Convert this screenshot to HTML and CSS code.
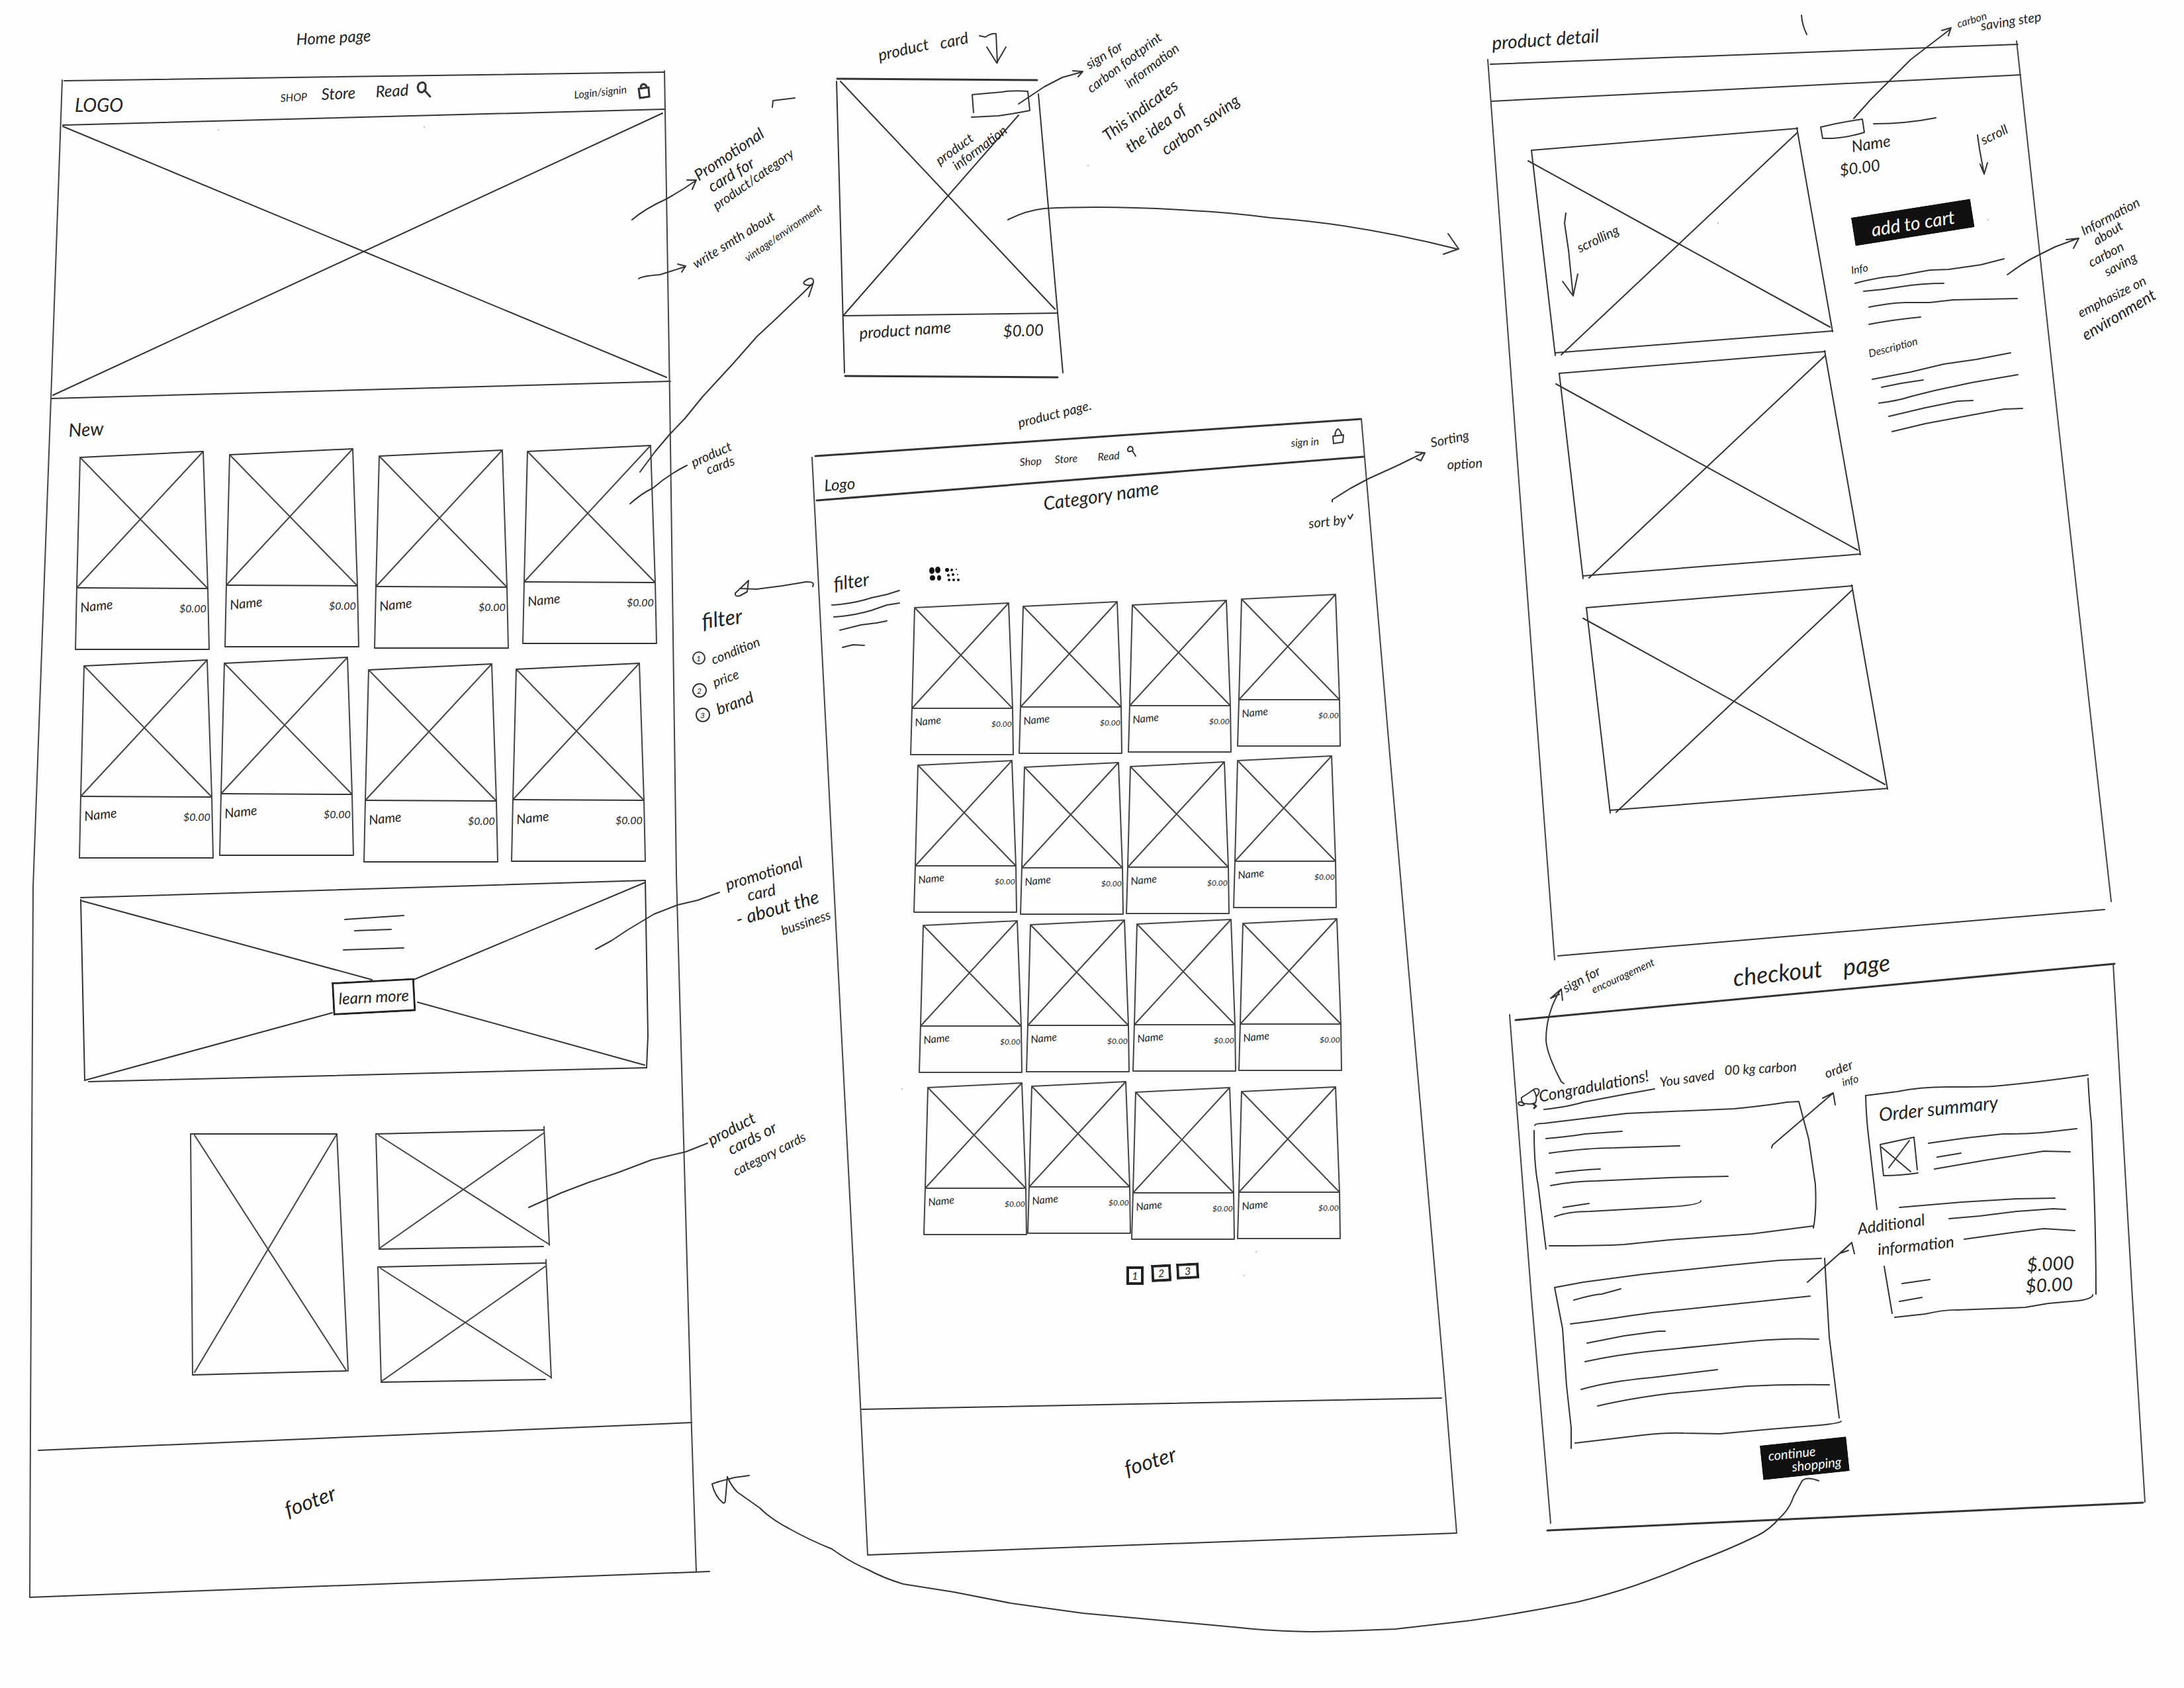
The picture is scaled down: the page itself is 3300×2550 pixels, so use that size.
FILE: index.html
```html
<!DOCTYPE html>
<html lang="en">
<head>
    <meta charset="UTF-8">
    <meta name="viewport" content="width=device-width, initial-scale=1.0">
    <title>Vintage Store Wireframes</title>
    <link rel="stylesheet" href="styles.css">
</head>
<body>
    <main class="board">
        <svg class="sketch" viewBox="0 0 3300 2550" xmlns="http://www.w3.org/2000/svg">
            <defs>
                <g id="card">
                    <path class="line" d="M0 0 L186 -9 M-5 197 L193 198 M-7 290 H195" />
                    <path class="thin" d="M-7 290 L-5 197 L0 0 L193 198 L195 290 M193 198 L186 -9 L-5 197" />
                </g>
                <g id="card-small">
                    <path class="thin" d="M0 0 L142 -7 L148 152 L149 222 H-6 L-4 151 L0 0 L148 152 H-4 L142 -7" />
                </g>
                <g id="photo">
                    <path class="line" d="M0 0 L402 -33 M36 306 L455 273 M-5 16 L451 267 M402 -27 L45 309" />
                    <path class="line" d="M0 0 L36 310 M401 -34 L455 274" />
                </g>
            </defs>

            <!-- Home page -->
            <g class="screen">
                <text class="note" transform="translate(448 68) rotate(-3)">Home page</text>
                <path class="line" d="M97 122 L1004 109 M95 189 L1004 165 M78 602 L1013 576 M58 2191 L1045 2149 M45 2413 L1072 2374" />
                <path class="thin" d="M94 121 L77 601 L50 1340 L46 2160 L45 2413 M1004 107 L1012 600 L1022 1322 L1045 2160 L1052 2374" />
                <path class="line" d="M95 191 L1007 570 M1001 171 L80 597" />

                <a href="#"><text class="title" transform="translate(113 169)">LOGO</text></a>
                <a href="#"><text class="small" transform="translate(424 154) rotate(-3)">SHOP</text></a>
                <a href="#"><text class="note" transform="translate(486 151) rotate(-3)">Store</text></a>
                <a href="#"><text class="note" transform="translate(568 147) rotate(-3)">Read</text></a>
                <path class="bold" d="M643 135 Q638 142 633 138 Q629 130 634 126 Q640 122 643 128 Z M641 136 L650 146" />
                <a href="#"><text class="small" transform="translate(868 149) rotate(-6)">Login/signin</text></a>
                <path class="bold" d="M965 134 L980 132 L981 146 L967 148 Z M968 133 Q968 128 972 127 Q977 128 977 132" />
                <circle class="dot" cx="330" cy="196" r="1" />
                <circle class="dot" cx="641" cy="192" r="1" />

                <text class="title" transform="translate(104 660) rotate(-3)">New</text>
                <g transform="translate(121 691)">
                    <use href="#card" />
                    <text class="label" transform="translate(1 234) rotate(-6)">Name</text>
                    <text class="small" transform="translate(150 234)">$0.00</text>
                </g>
                <g transform="translate(347 687)">
                    <use href="#card" />
                    <text class="label" transform="translate(1 234) rotate(-6)">Name</text>
                    <text class="small" transform="translate(150 234)">$0.00</text>
                </g>
                <g transform="translate(573 689)">
                    <use href="#card" />
                    <text class="label" transform="translate(1 234) rotate(-6)">Name</text>
                    <text class="small" transform="translate(150 234)">$0.00</text>
                </g>
                <g transform="translate(797 682)">
                    <use href="#card" />
                    <text class="label" transform="translate(1 234) rotate(-6)">Name</text>
                    <text class="small" transform="translate(150 234)">$0.00</text>
                </g>
                <g transform="translate(127 1006)">
                    <use href="#card" />
                    <text class="label" transform="translate(1 234) rotate(-6)">Name</text>
                    <text class="small" transform="translate(150 234)">$0.00</text>
                </g>
                <g transform="translate(339 1002)">
                    <use href="#card" />
                    <text class="label" transform="translate(1 234) rotate(-6)">Name</text>
                    <text class="small" transform="translate(150 234)">$0.00</text>
                </g>
                <g transform="translate(557 1012)">
                    <use href="#card" />
                    <text class="label" transform="translate(1 234) rotate(-6)">Name</text>
                    <text class="small" transform="translate(150 234)">$0.00</text>
                </g>
                <g transform="translate(780 1011)">
                    <use href="#card" />
                    <text class="label" transform="translate(1 234) rotate(-6)">Name</text>
                    <text class="small" transform="translate(150 234)">$0.00</text>
                </g>

                <!-- promo banner -->
                <path class="line" d="M122 1356 L975 1330 M134 1634 L977 1613 M124 1361 L562 1480 M975 1333 L625 1480 M502 1530 L128 1632 M631 1514 L974 1609" />
                <path class="line" d="M122 1359 L128 1632 M975 1330 L979 1564 L977 1613 M521 1389 L610 1383 M536 1406 L591 1404 M519 1435 L610 1432" />
                <foreignObject x="501" y="1484" width="125" height="50" transform="rotate(-3 501 1484)">
                    <button class="btn btn-outline">learn more</button>
                </foreignObject>

                <!-- category cards -->
                <path class="line" d="M288 1713 L509 1713 M291 2077 L524 2071 M568 1713 L822 1707 M573 1887 L821 1883 M571 1914 L825 1908 M576 2088 L824 2084" />
                <path class="thin" d="M288 1713 L291 2077 M509 1713 L526 2071 M294 1715 L523 2070 M509 1713 L294 2073" />
                <path class="thin" d="M568 1713 L573 1887 M822 1702 L830 1881 M572 1715 L830 1880 M821 1712 L573 1886" />
                <path class="thin" d="M571 1914 L576 2088 M825 1903 L833 2082 M575 1916 L833 2081 M824 1913 L576 2087" />

                <text class="footer" transform="translate(435 2292) rotate(-20)">footer</text>
            </g>

            <!-- Home page notes -->
            <g class="notes">
                <path class="line" d="M955 332 Q975 315 1006 301 Q1030 288 1051 273 M1038 272 L1052 272 L1046 286" />
                <text class="note" transform="translate(1056 274) rotate(-34)">Promotional</text>
                <text class="note" transform="translate(1076 291) rotate(-31)">card for</text>
                <text class="label" transform="translate(1083 318) rotate(-35)">product/category</text>
                <path class="line" d="M965 421 Q970 417 997 415 L1035 403 M1024 399 L1036 402 L1030 411" />
                <text class="label" transform="translate(1052 406) rotate(-32)">write smth about</text>
                <text class="small" transform="translate(1130 396) rotate(-35)">vintage/environment</text>
                <path class="line" d="M967 713 L990 682 L1012 656 L1035 632 L1061 600 L1107 550 L1144 508 L1170 484 L1217 439 L1229 427 Q1230 419 1222 421 Q1210 427 1217 430 Q1225 433 1229 427 L1222 448" />
                <path class="line" d="M952 761 Q970 745 987 737 Q1010 717 1038 703" />
                <text class="label" transform="translate(1048 706) rotate(-24)">product</text>
                <text class="label" transform="translate(1070 717) rotate(-20)">cards</text>
                <path class="line" d="M900 1434 L924 1421 L948 1405 L988 1381 L1024 1367 L1054 1360 L1087 1348" />
                <text class="note" transform="translate(1099 1345) rotate(-17)">promotional</text>
                <text class="note" transform="translate(1131 1361) rotate(-12)">card</text>
                <text class="title" transform="translate(1115 1399) rotate(-16)">- about the</text>
                <text class="label" transform="translate(1183 1413) rotate(-19)">bussiness</text>
                <path class="line" d="M799 1824 L848 1802 L890 1786 L932 1772 L985 1752 L1036 1740 L1069 1727" />
                <text class="note" transform="translate(1075 1731) rotate(-28)">product</text>
                <text class="note" transform="translate(1105 1745) rotate(-27)">cards or</text>
                <text class="label" transform="translate(1112 1777) rotate(-27)">category cards</text>
                <path class="line" d="M1167 162 L1168 152 L1201 148" />
            </g>

            <!-- Product card -->
            <g class="screen">
                <text class="note" transform="translate(1329 92) rotate(-13)">product</text>
                <text class="note" transform="translate(1422 74) rotate(-12)">card</text>
                <path class="line" d="M1480 54 L1489 56 Q1498 50 1505 51 L1507 95 M1491 71 L1506 95 L1520 71" />
                <path class="bold" d="M1265 119 L1567 121 M1277 568 L1598 570" />
                <path class="line" d="M1274 477 L1598 473 M1270 123 L1594 467 M1539 174 L1274 477" />
                <path class="line" d="M1264 123 L1276 563 M1569 142 L1606 563" />
                <path class="line" d="M1471 170 L1469 143 Q1490 141 1514 139 Q1530 136 1553 138 L1556 167 Q1530 172 1508 175 L1468 177" />
                <text class="label" transform="translate(1420 250) rotate(-36)">product</text>
                <text class="label" transform="translate(1446 258) rotate(-37)">information</text>
                <text class="note" transform="translate(1299 512) rotate(-4)">product name</text>
                <text class="note" transform="translate(1516 509) rotate(-2)">$0.00</text>
                <path class="line" d="M1539 157 L1578 131 L1605 117 L1634 109 M1621 107 L1636 108 L1629 116" />
                <text class="label" transform="translate(1646 105) rotate(-31)">sign for</text>
                <text class="label" transform="translate(1649 141) rotate(-37)">carbon footprint</text>
                <text class="label" transform="translate(1706 134) rotate(-37)">information</text>
                <text class="note" transform="translate(1674 214) rotate(-37)">This indicates</text>
                <text class="note" transform="translate(1708 232) rotate(-36)">the idea of</text>
                <text class="note" transform="translate(1762 235) rotate(-35)">carbon saving</text>
                <path class="line" d="M1523 332 Q1550 318 1578 315 Q1676 310 1799 318 Q1860 321 1920 329 Q2050 338 2201 376 M2188 353 L2204 376 L2181 384" />
                <circle class="dot" cx="1644" cy="250" r="1" />
            </g>

            <!-- Product page -->
            <g class="screen">
                <text class="label" transform="translate(1540 646) rotate(-14)">product page.</text>
                <path class="bold" d="M1232 689 L2056 633 M1234 756 L2060 690" />
                <path class="line" d="M1302 2129 L2178 2112 M1311 2349 L2201 2316" />
                <path class="thin" d="M1227 691 L1250 1140 L1256 1260 L1298 2080 L1311 2349 M2057 633 L2100 1140 L2182 2080 L2201 2316" />
                <a href="#"><text class="note" transform="translate(1246 742) rotate(-4)">Logo</text></a>
                <a href="#"><text class="small" transform="translate(1541 704) rotate(-4)">Shop</text></a>
                <a href="#"><text class="small" transform="translate(1594 700) rotate(-4)">Store</text></a>
                <a href="#"><text class="small" transform="translate(1659 696) rotate(-4)">Read</text></a>
                <path class="line" d="M1711 681 Q1703 684 1704 678 Q1707 673 1710 675 Q1713 678 1711 681 L1716 689" />
                <a href="#"><text class="small" transform="translate(1951 675) rotate(-4)">sign in</text></a>
                <path class="line" d="M2014 659 L2030 657 L2029 668 L2015 670 Z M2017 658 Q2018 649 2022 648 Q2026 651 2027 657" />
                <text class="title" transform="translate(1578 771) rotate(-8)">Category name</text>
                <foreignObject x="1976" y="778" width="64" height="24" transform="rotate(-6 1976 778)">
                    <select class="sort" aria-label="sort by"><option>sort by</option></select>
                </foreignObject>
                <path class="line" d="M2037 779 L2040 784 L2044 777" />
                <path class="line" d="M2013 758 L2013 755 L2040 738 L2068 723 L2110 704 L2151 684 M2139 683 L2153 684 L2147 696 L2140 693" />
                <text class="label" transform="translate(2163 676) rotate(-12)">Sorting</text>
                <text class="label" transform="translate(2187 709) rotate(-3)">option</text>

                <g class="view-toggle">
                    <ellipse cx="1408" cy="862" rx="4" ry="5" /><ellipse cx="1417" cy="861" rx="4" ry="5" />
                    <ellipse cx="1409" cy="873" rx="4" ry="4" /><ellipse cx="1419" cy="873" rx="3" ry="4" />
                    <circle cx="1431" cy="861" r="3" /><circle cx="1438" cy="861" r="2" /><circle cx="1445" cy="860" r="1" />
                    <circle cx="1433" cy="869" r="2" /><circle cx="1440" cy="868" r="2" /><circle cx="1447" cy="868" r="1" />
                    <circle cx="1434" cy="876" r="2" /><circle cx="1441" cy="876" r="2" /><circle cx="1448" cy="876" r="2" />
                </g>

                <text class="title" transform="translate(1261 892) rotate(-8)">filter</text>
                <path class="line" d="M1257 914 Q1290 912 1317 903 L1340 898 L1359 892 M1260 932 Q1290 930 1317 922 L1340 914 L1359 911 M1269 952 L1301 944 L1325 941 L1340 938 M1273 978 L1289 974 L1306 975" />
                <path class="line" d="M1228 886 Q1232 878 1218 879 L1182 885 L1143 890 L1119 889 M1131 877 L1111 896 Q1110 902 1118 900 L1129 894 L1131 877" />
                <text class="footer" transform="translate(1062 950) rotate(-8)">filter</text>
                <circle class="line" cx="1056" cy="994" r="9" />
                <text class="tiny" x="1052" y="999">1</text>
                <text class="label" transform="translate(1078 1004) rotate(-22)">condition</text>
                <circle class="line" cx="1057" cy="1043" r="10" />
                <text class="tiny" x="1053" y="1048">2</text>
                <text class="label" transform="translate(1080 1038) rotate(-20)">price</text>
                <circle class="line" cx="1062" cy="1080" r="10" />
                <text class="tiny" x="1058" y="1085">3</text>
                <text class="note" transform="translate(1086 1080) rotate(-20)">brand</text>

                <g transform="translate(1382 918)">
                    <use href="#card-small" />
                    <text class="small" transform="translate(1 179) rotate(-6)">Name</text>
                    <text class="tiny" transform="translate(116 180)">$0.00</text>
                </g>
                <g transform="translate(1546 916)">
                    <use href="#card-small" />
                    <text class="small" transform="translate(1 179) rotate(-6)">Name</text>
                    <text class="tiny" transform="translate(116 180)">$0.00</text>
                </g>
                <g transform="translate(1711 914)">
                    <use href="#card-small" />
                    <text class="small" transform="translate(1 179) rotate(-6)">Name</text>
                    <text class="tiny" transform="translate(116 180)">$0.00</text>
                </g>
                <g transform="translate(1876 905)">
                    <use href="#card-small" />
                    <text class="small" transform="translate(1 179) rotate(-6)">Name</text>
                    <text class="tiny" transform="translate(116 180)">$0.00</text>
                </g>
                <g transform="translate(1387 1156)">
                    <use href="#card-small" />
                    <text class="small" transform="translate(1 179) rotate(-6)">Name</text>
                    <text class="tiny" transform="translate(116 180)">$0.00</text>
                </g>
                <g transform="translate(1548 1159)">
                    <use href="#card-small" />
                    <text class="small" transform="translate(1 179) rotate(-6)">Name</text>
                    <text class="tiny" transform="translate(116 180)">$0.00</text>
                </g>
                <g transform="translate(1708 1158)">
                    <use href="#card-small" />
                    <text class="small" transform="translate(1 179) rotate(-6)">Name</text>
                    <text class="tiny" transform="translate(116 180)">$0.00</text>
                </g>
                <g transform="translate(1870 1149)">
                    <use href="#card-small" />
                    <text class="small" transform="translate(1 179) rotate(-6)">Name</text>
                    <text class="tiny" transform="translate(116 180)">$0.00</text>
                </g>
                <g transform="translate(1395 1398)">
                    <use href="#card-small" />
                    <text class="small" transform="translate(1 179) rotate(-6)">Name</text>
                    <text class="tiny" transform="translate(116 180)">$0.00</text>
                </g>
                <g transform="translate(1557 1397)">
                    <use href="#card-small" />
                    <text class="small" transform="translate(1 179) rotate(-6)">Name</text>
                    <text class="tiny" transform="translate(116 180)">$0.00</text>
                </g>
                <g transform="translate(1718 1396)">
                    <use href="#card-small" />
                    <text class="small" transform="translate(1 179) rotate(-6)">Name</text>
                    <text class="tiny" transform="translate(116 180)">$0.00</text>
                </g>
                <g transform="translate(1878 1395)">
                    <use href="#card-small" />
                    <text class="small" transform="translate(1 179) rotate(-6)">Name</text>
                    <text class="tiny" transform="translate(116 180)">$0.00</text>
                </g>
                <g transform="translate(1402 1643)">
                    <use href="#card-small" />
                    <text class="small" transform="translate(1 179) rotate(-6)">Name</text>
                    <text class="tiny" transform="translate(116 180)">$0.00</text>
                </g>
                <g transform="translate(1559 1641)">
                    <use href="#card-small" />
                    <text class="small" transform="translate(1 179) rotate(-6)">Name</text>
                    <text class="tiny" transform="translate(116 180)">$0.00</text>
                </g>
                <g transform="translate(1716 1650)">
                    <use href="#card-small" />
                    <text class="small" transform="translate(1 179) rotate(-6)">Name</text>
                    <text class="tiny" transform="translate(116 180)">$0.00</text>
                </g>
                <g transform="translate(1876 1649)">
                    <use href="#card-small" />
                    <text class="small" transform="translate(1 179) rotate(-6)">Name</text>
                    <text class="tiny" transform="translate(116 180)">$0.00</text>
                </g>

                <foreignObject x="1702" y="1913" width="26" height="28">
                    <button class="btn page-btn">1</button>
                </foreignObject>
                <foreignObject x="1739" y="1911" width="30" height="26" transform="rotate(-3 1739 1911)">
                    <button class="btn page-btn">2</button>
                </foreignObject>
                <foreignObject x="1777" y="1909" width="34" height="24" transform="rotate(-3 1777 1909)">
                    <button class="btn page-btn">3</button>
                </foreignObject>
                <circle class="dot" cx="1363" cy="1645" r="1" />
                <circle class="dot" cx="1898" cy="1891" r="1" />
                <circle class="dot" cx="1880" cy="1927" r="1" />
                <text class="footer" transform="translate(1703 2230) rotate(-17)">footer</text>
            </g>

            <!-- Product detail -->
            <g class="screen">
                <text class="title" transform="translate(2255 75) rotate(-4)">product detail</text>
                <path class="line" d="M2722 23 Q2723 38 2730 52" />
                <path class="line" d="M2252 97 L3049 67 M2253 153 L3053 113 M2354 1444 L3180 1374" />
                <path class="thin" d="M2248 90 L2296 740 L2349 1450 M3047 62 L3121 740 L3190 1362" />
                <use href="#photo" x="2314" y="227" />
                <use href="#photo" x="2356" y="564" />
                <use href="#photo" x="2397" y="918" />
                <path class="line" d="M2366 322 L2364 337 L2370 378 L2377 447 M2361 425 L2377 447 L2384 414" />
                <text class="label" transform="translate(2387 382) rotate(-26)">scrolling</text>

                <path class="line" d="M2751 192 Q2780 185 2814 180 L2817 200 Q2785 210 2754 209 Z M2831 187 Q2880 187 2925 178" />
                <path class="line" d="M2801 179 L2826 151 L2852 125 L2887 90 L2947 44 M2934 46 L2948 42 L2944 54" />
                <text class="small" transform="translate(2959 42) rotate(-17)">carbon</text>
                <text class="label" transform="translate(2994 46) rotate(-9)">saving step</text>
                <text class="note" transform="translate(2799 230) rotate(-9)">Name</text>
                <text class="note" transform="translate(2781 266) rotate(-8)">$0.00</text>
                <path class="line" d="M2988 204 L2991 225 L2998 263 M2992 248 L2998 263 L3003 246" />
                <text class="label" transform="translate(2997 219) rotate(-26)">scroll</text>
                <foreignObject x="2797" y="329" width="182" height="43" transform="rotate(-9 2797 329)">
                    <button class="btn btn-fill">add to cart</button>
                </foreignObject>

                <text class="small" transform="translate(2798 414) rotate(-10)">Info</text>
                <path class="line" d="M2803 428 Q2840 418 2866 417 L2916 408 L2944 407 L2993 400 L3028 391 M2816 440 Q2845 438 2873 433 Q2905 428 2937 428 M2824 464 Q2860 457 2880 457 L2916 457 L2951 453 L3048 451 M2824 490 Q2860 483 2902 479" />
                <text class="small" transform="translate(2825 540) rotate(-15)">Description</text>
                <path class="line" d="M2829 573 L2887 562 L2937 550 L2986 543 L3038 533 M2843 585 L2873 579 L2906 574 M2839 609 Q2870 605 2887 599 L2923 590 L2979 578 L3049 566 M2854 629 L2909 616 L2958 606 L2981 605 M2859 652 L2909 640 L2979 627 L3028 618 L3056 617" />
                <path class="line" d="M3033 415 Q3060 395 3077 387 L3105 373 L3140 360 M3122 362 L3141 360 L3133 375" />
                <text class="label" transform="translate(3149 356) rotate(-28)">Information</text>
                <text class="label" transform="translate(3168 371) rotate(-32)">about</text>
                <text class="label" transform="translate(3160 404) rotate(-28)">carbon</text>
                <text class="label" transform="translate(3184 418) rotate(-28)">saving</text>
                <text class="label" transform="translate(3144 480) rotate(-27)">emphasize on</text>
                <text class="note" transform="translate(3152 515) rotate(-31)">environment</text>
                <circle class="dot" cx="2596" cy="337" r="1" />
                <circle class="dot" cx="3004" cy="332" r="1" />
            </g>

            <!-- Checkout page -->
            <g class="screen">
                <text class="heading" transform="translate(2620 1490) rotate(-6)">checkout</text>
                <text class="heading" transform="translate(2786 1474) rotate(-6)">page</text>
                <path class="bold" d="M2290 1541 L3195 1456 M2338 2312 L3238 2270" />
                <path class="thin" d="M2281 1533 L2314 1960 L2343 2301 M3193 1456 L3222 1960 L3241 2269" />
                <path class="line" d="M2363 1637 L2359 1634 Q2337 1592 2336 1571 Q2336 1530 2358 1495 M2343 1508 L2359 1494 L2361 1511 M2343 1508 L2356 1502" />
                <text class="label" transform="translate(2366 1500) rotate(-28)">sign for</text>
                <text class="small" transform="translate(2408 1501) rotate(-25)">encouragement</text>

                <path class="line" d="M2317 1646 L2310 1651 L2299 1658 Q2298 1665 2303 1667 Q2314 1669 2320 1666 Q2324 1657 2317 1646 Q2322 1643 2325 1646 Q2327 1650 2322 1656 M2302 1667 Q2296 1662 2294 1667 Q2296 1672 2303 1669" />
                <path class="bold" d="M2317 1668 L2321 1671 L2318 1674" />
                <text class="note" transform="translate(2327 1665) rotate(-11)">Congradulations!</text>
                <text class="label" transform="translate(2509 1642) rotate(-8)">You saved</text>
                <text class="label" transform="translate(2606 1624) rotate(-3)">00 kg carbon</text>
                <path class="line" d="M2333 1676 Q2370 1672 2392 1665 L2461 1652 L2500 1645" />

                <path class="line" d="M2319 1700 Q2320 1697 2333 1697 L2399 1689 L2458 1682 L2620 1675 Q2670 1670 2700 1665 L2718 1664 L2733 1721 L2743 1789 Q2745 1830 2740 1855 M2341 1882 Q2420 1882 2454 1880 L2523 1873 L2647 1864 L2740 1852" />
                <path class="line" d="M2318 1708 Q2318 1760 2324 1790 L2336 1887" />
                <path class="line" d="M2336 1720 Q2370 1717 2395 1713 L2451 1709 M2341 1742 Q2400 1734 2440 1734 L2538 1731 M2351 1772 Q2390 1767 2418 1766 M2343 1791 Q2380 1784 2413 1784 L2523 1779 L2611 1777 M2362 1824 L2401 1818 M2349 1838 Q2370 1830 2403 1830 L2509 1824 Q2570 1821 2570 1814" />
                <path class="line" d="M2677 1734 L2678 1730 L2769 1652 M2754 1659 L2770 1651 L2773 1669" />
                <text class="label" transform="translate(2760 1629) rotate(-20)">order</text>
                <text class="small" transform="translate(2785 1641) rotate(-15)">info</text>

                <path class="line" d="M2349 1945 L2392 1937 L2482 1925 L2606 1912 L2688 1904 L2752 1901 M2380 2180 L2482 2168 Q2520 2164 2544 2165 L2599 2166 L2675 2159 L2750 2153 Q2780 2150 2782 2147" />
                <path class="line" d="M2349 1945 L2361 2007 L2367 2093 L2374 2157 L2374 2188 M2757 1901 L2764 2020 L2779 2142" />
                <path class="line" d="M2378 1964 Q2410 1955 2420 1955 L2449 1947 M2373 2000 Q2400 1997 2496 1983 L2735 1958 M2398 2029 L2454 2018 L2506 2011 L2516 2011 M2395 2057 Q2440 2047 2496 2041 L2647 2026 Q2700 2021 2748 2023 M2389 2099 Q2430 2087 2496 2081 L2595 2069 M2414 2124 Q2460 2113 2523 2105 L2640 2094 Q2700 2091 2764 2092" />
                <path class="line" d="M2731 1937 L2797 1878 M2781 1893 L2798 1877 L2802 1894 M2781 1893 L2793 1889" />

                <path class="line" d="M2819 1655 L2867 1649 Q2900 1642 2943 1642 Q3000 1642 3012 1641 Q3080 1635 3155 1624 M2863 1990 L2909 1985 Q2940 1978 2957 1979 L3060 1975 L3095 1969 L3140 1965 Q3162 1962 3162 1956" />
                <path class="line" d="M2819 1655 Q2820 1690 2823 1714 L2836 1827 M2847 1913 L2859 1984 M3155 1629 Q3157 1670 3160 1696 L3164 1793 Q3167 1880 3167 1955" />
                <text class="title" transform="translate(2840 1694) rotate(-6)">Order summary</text>
                <path class="line" d="M2846 1776 L2841 1729 L2892 1718 L2897 1767 M2846 1776 Q2870 1776 2898 1772 M2843 1733 L2887 1770 M2885 1723 L2854 1764" />
                <path class="line" d="M2914 1727 L2971 1719 L3026 1713 Q3070 1713 3095 1710 L3138 1705 M2927 1748 L2963 1742 M2923 1766 L2998 1753 L3088 1739 L3128 1740 M2870 1824 L2964 1816 L3047 1811 L3105 1810 M2945 1841 L2991 1837 L3047 1830 L3102 1826 L3121 1827 M2968 1872 L3033 1863 L3088 1856 L3135 1859" />
                <text class="note" transform="translate(2808 1865) rotate(-8)">Additional</text>
                <text class="note" transform="translate(2838 1896) rotate(-6)">information</text>
                <path class="line" d="M2874 1939 L2916 1933 M2870 1966 L2904 1960" />
                <text class="title" transform="translate(3063 1921) rotate(-3)">$.000</text>
                <text class="title" transform="translate(3061 1953) rotate(-3)">$0.00</text>

                <foreignObject x="2659" y="2184" width="131" height="52" transform="rotate(-6 2659 2184)">
                    <button class="btn btn-fill btn-stacked"><span>continue</span> <span>shopping</span></button>
                </foreignObject>
                <path class="line" d="M2748 2237 Q2730 2230 2723 2237 L2710 2261 Q2704 2280 2688 2294 Q2675 2310 2655 2320 Q2610 2342 2558 2361 Q2520 2378 2471 2395 Q2430 2409 2384 2420 Q2300 2437 2222 2448 L2108 2461 Q2040 2464 1983 2465 Q1920 2464 1875 2459 L1745 2447 L1636 2437 L1528 2422 L1441 2405 L1365 2393 Q1335 2384 1311 2371 Q1285 2360 1257 2340 Q1220 2325 1192 2309 Q1165 2295 1148 2278 L1114 2254 Q1105 2245 1099 2231" />
                <path class="line" d="M1132 2229 L1110 2232 Q1078 2240 1076 2242 Q1080 2260 1092 2270 Q1096 2272 1096 2266 L1099 2231" />
            </g>
        </svg>
    </main>
</body>
</html>
```
FILE: styles.css
```css
body {
    margin: 0;
    background-color: #fefefe;
    color: #222;
    font-family: Lato, "Liberation Sans", sans-serif;
}

.board {
    width: 100%;
}

.sketch {
    display: block;
    width: 100%;
    height: auto;
}

/* strokes */
.line,
.thin,
.bold {
    fill: none;
    stroke: #333;
    stroke-linecap: round;
    stroke-linejoin: round;
    stroke-width: 2;
}

.thin {
    stroke: #444;
}

.bold {
    stroke-width: 3;
}

.dot {
    fill: #aaa;
}

.view-toggle {
    fill: #111;
}

/* handwriting */
text {
    fill: #222;
    font-style: italic;
}

.tiny {
    font-size: 12px;
}

.small {
    font-size: 16px;
}

.label {
    font-size: 20px;
}

.note {
    font-size: 24px;
}

.title {
    font-size: 28px;
}

.footer {
    font-size: 32px;
}

.heading {
    font-size: 36px;
}

/* controls */
.btn {
    display: block;
    box-sizing: border-box;
    width: 100%;
    height: 100%;
    margin: 0;
    padding: 0;
    border: 3px solid #222;
    background: none;
    color: #222;
    font-family: inherit;
    font-size: 20px;
    font-style: italic;
    line-height: 20px;
    cursor: pointer;
}

.btn-outline {
    font-size: 24px;
    line-height: 24px;
}

.btn-fill {
    border-color: #111;
    background-color: #111;
    color: #fff;
    font-size: 28px;
}

.btn-stacked {
    display: flex;
    flex-direction: column;
    justify-content: center;
    padding: 0 8px;
    font-size: 20px;
}

.btn-stacked span:last-child {
    align-self: flex-end;
}

.btn-stacked span:first-child {
    align-self: flex-start;
}

.page-btn {
    border-width: 4px;
    font-size: 16px;
    line-height: 16px;
}

.sort {
    appearance: none;
    width: 100%;
    height: 100%;
    padding: 0;
    border: none;
    background: none;
    color: #222;
    font-family: inherit;
    font-size: 20px;
    font-style: italic;
}
```
